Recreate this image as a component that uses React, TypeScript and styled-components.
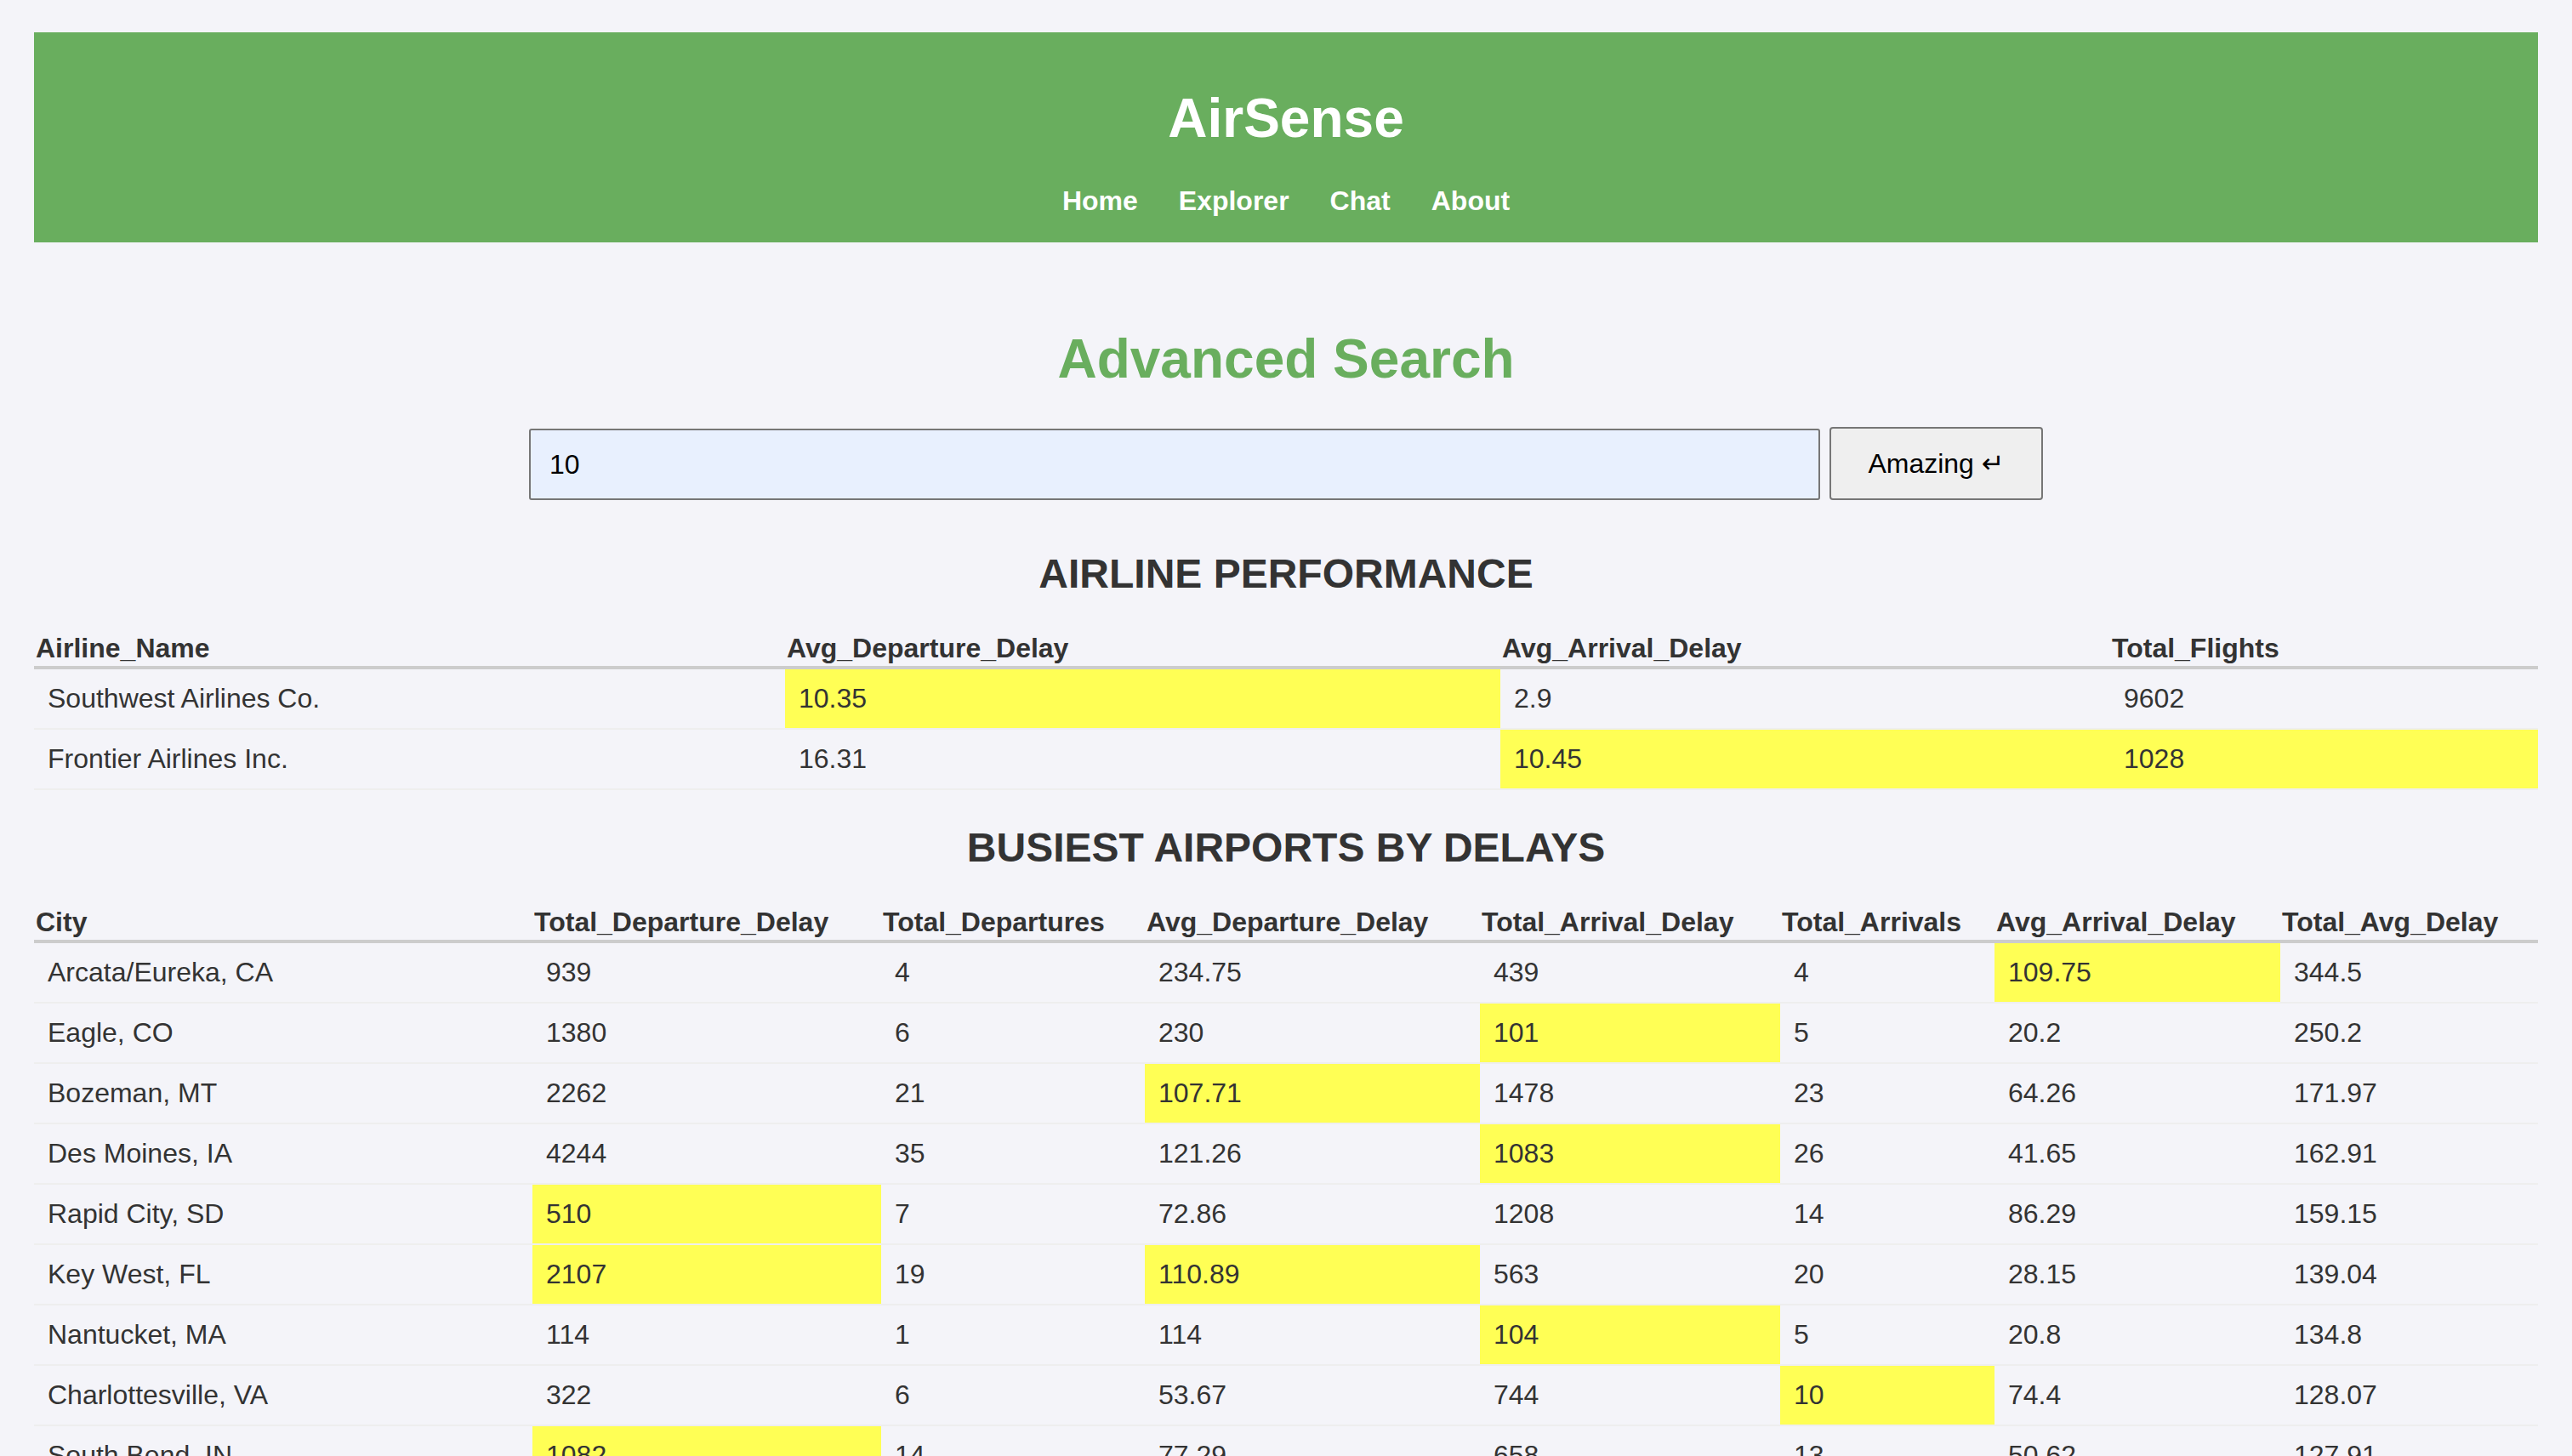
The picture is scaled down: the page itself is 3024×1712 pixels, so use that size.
import React from "react";
import styled, { createGlobalStyle } from "styled-components";

const GlobalStyle = createGlobalStyle`
  html {
    scrollbar-width: none;
  }
  html::-webkit-scrollbar { display: none; }
  body {
    margin: 0;
    background: #f4f4f9;
    font-family: "Liberation Sans", Arial, Helvetica, sans-serif;
    color: #333;
  }
`;

const Page = styled.div`
  padding: 38px 40px 40px;
`;

const Header = styled.header`
  background: #69ae5e;
  color: #fff;
  text-align: center;
  padding: 64px 0 30px;
`;

const Brand = styled.h1`
  margin: 0 0 42px;
  font-size: 64px;
  font-weight: bold;
  line-height: normal;
`;

const Nav = styled.nav`
  display: flex;
  justify-content: center;
  gap: 48px;
`;

const NavLink = styled.a`
  color: #fff;
  font-size: 32px;
  font-weight: bold;
  text-decoration: none;
  line-height: normal;
`;

const Main = styled.main`
  display: flex;
  flex-direction: column;
`;

const Title = styled.h1`
  margin: 100px 0 43px;
  text-align: center;
  color: #69ae5e;
  font-size: 64px;
  font-weight: bold;
  line-height: normal;
`;

const SearchRow = styled.form`
  display: flex;
  justify-content: center;
  align-items: flex-end;
  gap: 11px;
  margin: 0 0 19px;
`;

const SearchInput = styled.input`
  box-sizing: border-box;
  width: 1518px;
  height: 84px;
  padding: 0 22px;
  border: 2px solid #767676;
  border-radius: 3px;
  background: #e8f0fe;
  color: #000;
  font-family: "Liberation Sans", Arial, sans-serif;
  font-size: 32px;
  outline: none;
`;

const SearchButton = styled.button`
  box-sizing: border-box;
  width: 251px;
  height: 86px;
  padding: 0;
  border: 2px solid #767676;
  border-radius: 4px;
  background: #efefef;
  color: #000;
  font-family: "Liberation Sans", Arial, "DejaVu Sans", sans-serif;
  font-size: 32px;
  cursor: pointer;
`;

const SectionTitle = styled.h2`
  margin: 40px 0;
  text-align: center;
  text-transform: uppercase;
  color: #333;
  font-size: 48px;
  font-weight: bold;
  line-height: normal;
`;

const Table = styled.table`
  width: 100%;
  table-layout: fixed;
  border-collapse: collapse;
  font-size: 32px;
`;

const HeadCell = styled.th`
  padding: 2px;
  text-align: left;
  font-weight: bold;
  color: #333;
  border-bottom: 4px solid #ccc;
  line-height: normal;
  white-space: nowrap;
`;

const Cell = styled.td<{ $hl?: boolean }>`
  padding: 16px;
  color: #333;
  border-bottom: 2px solid #eee;
  background: ${(p) => (p.$hl ? "#ffff55" : "transparent")};
  line-height: normal;
  white-space: nowrap;
`;

type Row = (string | number)[];

const QUERY = "10";

const airlineCols = ["Airline_Name", "Avg_Departure_Delay", "Avg_Arrival_Delay", "Total_Flights"];
const airlineWidths = [883, 841, 717, 503];
const airlineRows: Row[] = [
  ["Southwest Airlines Co.", "10.35", "2.9", "9602"],
  ["Frontier Airlines Inc.", "16.31", "10.45", "1028"],
];

const airportCols = [
  "City",
  "Total_Departure_Delay",
  "Total_Departures",
  "Avg_Departure_Delay",
  "Total_Arrival_Delay",
  "Total_Arrivals",
  "Avg_Arrival_Delay",
  "Total_Avg_Delay",
];
const airportWidths = [586, 410, 310, 394, 353, 252, 336, 303];
const airportRows: Row[] = [
  ["Arcata/Eureka, CA", "939", "4", "234.75", "439", "4", "109.75", "344.5"],
  ["Eagle, CO", "1380", "6", "230", "101", "5", "20.2", "250.2"],
  ["Bozeman, MT", "2262", "21", "107.71", "1478", "23", "64.26", "171.97"],
  ["Des Moines, IA", "4244", "35", "121.26", "1083", "26", "41.65", "162.91"],
  ["Rapid City, SD", "510", "7", "72.86", "1208", "14", "86.29", "159.15"],
  ["Key West, FL", "2107", "19", "110.89", "563", "20", "28.15", "139.04"],
  ["Nantucket, MA", "114", "1", "114", "104", "5", "20.8", "134.8"],
  ["Charlottesville, VA", "322", "6", "53.67", "744", "10", "74.4", "128.07"],
  ["South Bend, IN", "1082", "14", "77.29", "658", "13", "50.62", "127.91"],
];

function DataTable({ cols, widths, rows }: { cols: string[]; widths: number[]; rows: Row[] }) {
  return (
    <Table>
      <colgroup>
        {widths.map((w, i) => (
          <col key={i} style={{ width: `${w}px` }} />
        ))}
      </colgroup>
      <thead>
        <tr>
          {cols.map((c) => (
            <HeadCell key={c}>{c}</HeadCell>
          ))}
        </tr>
      </thead>
      <tbody>
        {rows.map((r, ri) => (
          <tr key={ri}>
            {r.map((v, ci) => (
              <Cell key={ci} $hl={ci > 0 && String(v).includes(QUERY)}>
                {v}
              </Cell>
            ))}
          </tr>
        ))}
      </tbody>
    </Table>
  );
}

export default function App() {
  return (
    <Page>
      <GlobalStyle />
      <Header>
        <Brand>AirSense</Brand>
        <Nav>
          <NavLink href="#">Home</NavLink>
          <NavLink href="#">Explorer</NavLink>
          <NavLink href="#">Chat</NavLink>
          <NavLink href="#">About</NavLink>
        </Nav>
      </Header>
      <Main>
        <Title>Advanced Search</Title>
        <SearchRow onSubmit={(e) => e.preventDefault()}>
          <SearchInput defaultValue="10" />
          <SearchButton type="submit">Amazing ↵</SearchButton>
        </SearchRow>
        <SectionTitle>Airline Performance</SectionTitle>
        <DataTable cols={airlineCols} widths={airlineWidths} rows={airlineRows} />
        <SectionTitle>Busiest Airports by Delays</SectionTitle>
        <DataTable cols={airportCols} widths={airportWidths} rows={airportRows} />
      </Main>
    </Page>
  );
}
